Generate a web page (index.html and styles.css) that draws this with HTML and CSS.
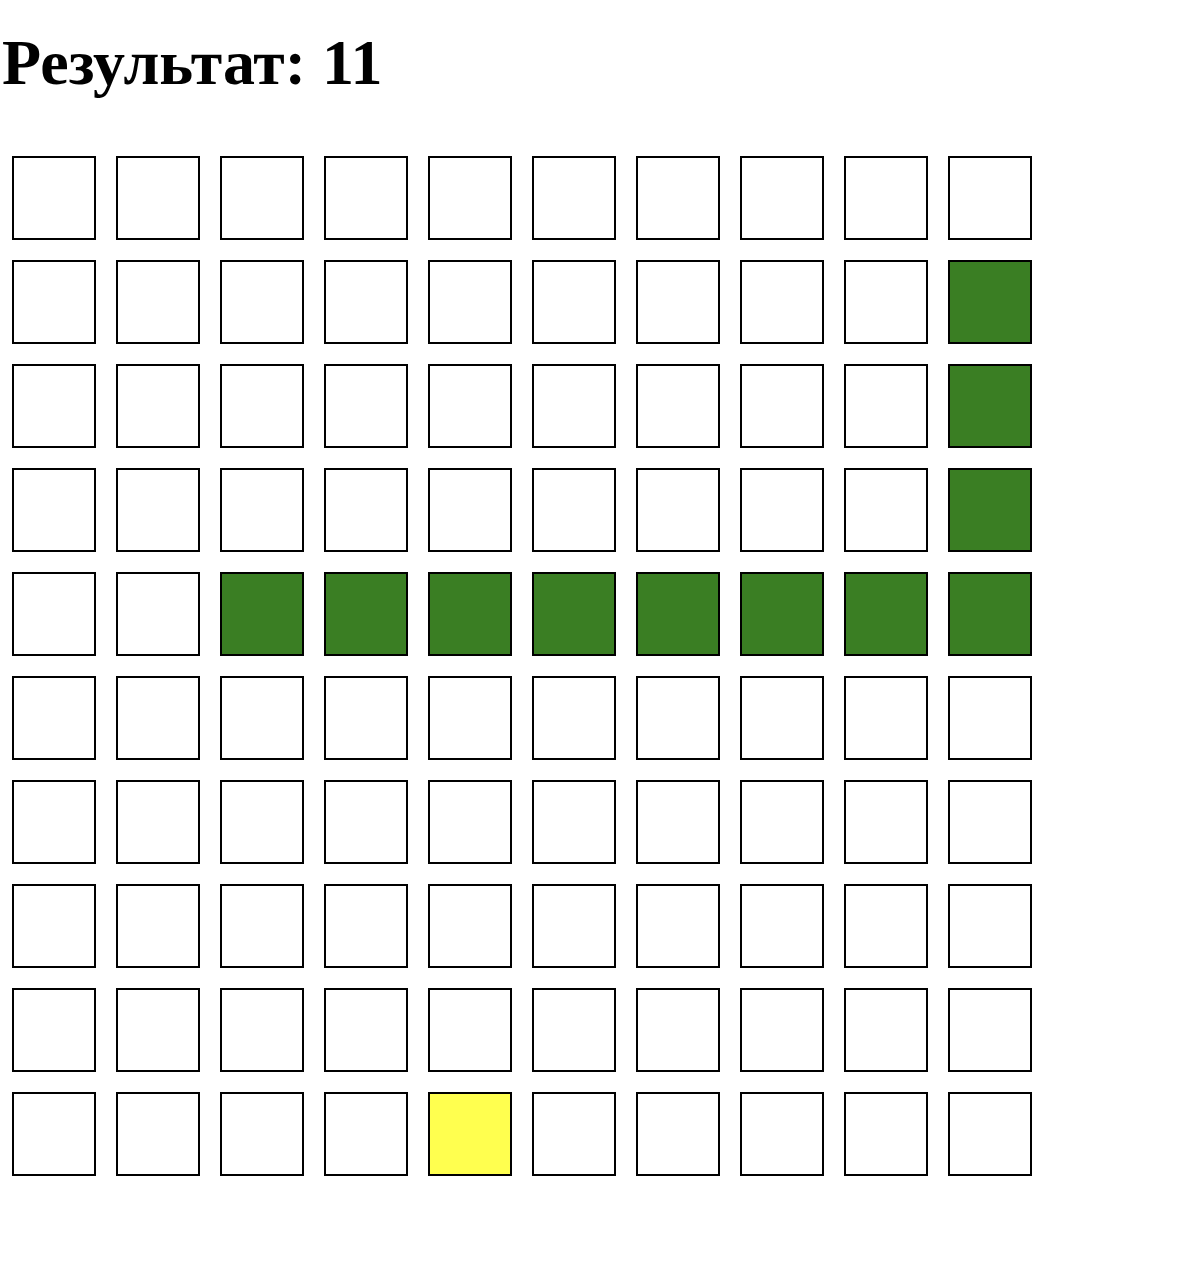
FILE: index.html
```html
<!DOCTYPE html>
<html lang="ru">
<head>
<meta charset="utf-8">
<title>Результат</title>
<link rel="stylesheet" href="styles.css">
</head>
<body>
<h1 class="title">Результат: 11</h1>
<div class="board">
  <div class="row"><div class="cell"></div><div class="cell"></div><div class="cell"></div><div class="cell"></div><div class="cell"></div><div class="cell"></div><div class="cell"></div><div class="cell"></div><div class="cell"></div><div class="cell"></div></div>
  <div class="row"><div class="cell"></div><div class="cell"></div><div class="cell"></div><div class="cell"></div><div class="cell"></div><div class="cell"></div><div class="cell"></div><div class="cell"></div><div class="cell"></div><div class="cell snake"></div></div>
  <div class="row"><div class="cell"></div><div class="cell"></div><div class="cell"></div><div class="cell"></div><div class="cell"></div><div class="cell"></div><div class="cell"></div><div class="cell"></div><div class="cell"></div><div class="cell snake"></div></div>
  <div class="row"><div class="cell"></div><div class="cell"></div><div class="cell"></div><div class="cell"></div><div class="cell"></div><div class="cell"></div><div class="cell"></div><div class="cell"></div><div class="cell"></div><div class="cell snake"></div></div>
  <div class="row"><div class="cell"></div><div class="cell"></div><div class="cell snake"></div><div class="cell snake"></div><div class="cell snake"></div><div class="cell snake"></div><div class="cell snake"></div><div class="cell snake"></div><div class="cell snake"></div><div class="cell snake"></div></div>
  <div class="row"><div class="cell"></div><div class="cell"></div><div class="cell"></div><div class="cell"></div><div class="cell"></div><div class="cell"></div><div class="cell"></div><div class="cell"></div><div class="cell"></div><div class="cell"></div></div>
  <div class="row"><div class="cell"></div><div class="cell"></div><div class="cell"></div><div class="cell"></div><div class="cell"></div><div class="cell"></div><div class="cell"></div><div class="cell"></div><div class="cell"></div><div class="cell"></div></div>
  <div class="row"><div class="cell"></div><div class="cell"></div><div class="cell"></div><div class="cell"></div><div class="cell"></div><div class="cell"></div><div class="cell"></div><div class="cell"></div><div class="cell"></div><div class="cell"></div></div>
  <div class="row"><div class="cell"></div><div class="cell"></div><div class="cell"></div><div class="cell"></div><div class="cell"></div><div class="cell"></div><div class="cell"></div><div class="cell"></div><div class="cell"></div><div class="cell"></div></div>
  <div class="row"><div class="cell"></div><div class="cell"></div><div class="cell"></div><div class="cell"></div><div class="cell food"></div><div class="cell"></div><div class="cell"></div><div class="cell"></div><div class="cell"></div><div class="cell"></div></div>
</div>
</body>
</html>
```
FILE: styles.css
```css
html, body {
  margin: 0;
  padding: 0;
  background: #ffffff;
}

body {
  font-family: "Liberation Serif", "Times New Roman", serif;
  color: #000000;
}

.title {
  font-size: 64px;
  font-weight: bold;
  line-height: 74px;
  margin: 26px 0 0 2px;
}

.board {
  display: flex;
  flex-direction: column;
  gap: 20px;
  padding: 56px 0 0 12px;
}

.row {
  display: flex;
  gap: 20px;
}

.cell {
  width: 80px;
  height: 80px;
  border: 2px solid #000000;
  background: #ffffff;
  flex: none;
}

.cell.snake {
  background: #3a7e23;
}

.cell.food {
  background: #ffff4f;
}
```
